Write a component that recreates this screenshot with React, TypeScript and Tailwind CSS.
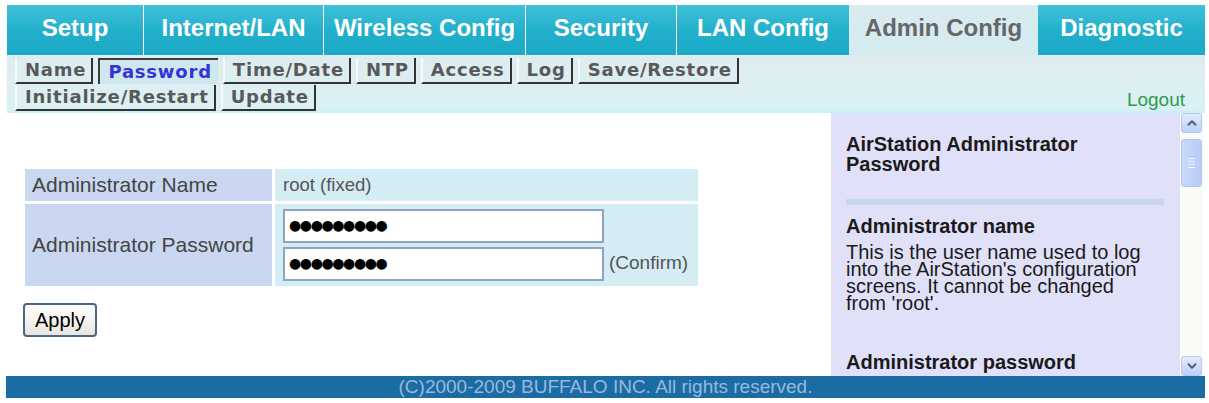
import { ChevronDown, ChevronUp } from "lucide-react";

const tabs = [
  { label: "Setup", w: "w-[136px]" },
  { label: "Internet/LAN", w: "w-[180px]" },
  { label: "Wireless Config", w: "w-[202px]" },
  { label: "Security", w: "w-[151px]" },
  { label: "LAN Config", w: "w-[173px]" },
  { label: "Admin Config", w: "w-[189px]", active: true },
  { label: "Diagnostic", w: "w-[167px]" },
];

const subRow1 = ["Name", "Password", "Time/Date", "NTP", "Access", "Log", "Save/Restore"];
const subRow2 = ["Initialize/Restart", "Update"];

function SubLink({ label }: { label: string }) {
  if (label === "Password") {
    return (
      <span className="h-[26px] pl-[8px] pr-[6px] leading-[24px] border-t-2 border-l-2 border-[#3a3a3a] bg-[#cfe7ee] text-[#3434d6]">
        {label}
      </span>
    );
  }
  return (
    <span className="h-[26px] pl-[8px] pr-[5px] leading-[24px] border-r-2 border-b-2 border-[#333] border-l-2 border-l-[#f4fafa] text-[#58595b]">
      {label}
    </span>
  );
}

function ScrollButton({ children }: { children: React.ReactNode }) {
  return (
    <div className="h-[20px] rounded-[3px] border border-[#b4c8f4] bg-gradient-to-b from-[#e4ecfc] to-[#bccff6] flex items-center justify-center text-[#4d6185]">
      {children}
    </div>
  );
}

export default function App() {
  return (
    <div className="w-[1209px] h-[403px] bg-white overflow-hidden font-['Liberation_Sans',Arial,sans-serif]">
      <div className="pt-[5px] pl-[7px] pr-[4px]">
        <div className="flex h-[50px]">
          {tabs.map((t, i) => (
            <div
              key={t.label}
              className={
                t.active
                  ? `${t.w} flex items-center justify-center pb-[4px] text-[24px] font-bold text-[#646668] bg-gradient-to-b from-[#d9ecf0] to-[#d4ebef]`
                  : `${t.w} flex items-center justify-center pb-[4px] text-[24px] font-bold text-white bg-gradient-to-b from-[#3fc1d9] via-[#22b0cc] to-[#1aa9c6] ${i > 0 && i < 5 ? "border-l border-white" : ""}`
              }
            >
              {t.label}
            </div>
          ))}
        </div>

        <div className="h-[58px] pl-[8px] pr-[20px] pt-[3px] bg-gradient-to-b from-[#dfecef] to-[#daf1f4] border-b-2 border-[#c6f1f6] font-['DejaVu_Sans',sans-serif] font-bold text-[18px] tracking-[0.8px]">
          <div className="flex gap-[5px]">
            {subRow1.map((s) => (
              <SubLink key={s} label={s} />
            ))}
          </div>
          <div className="flex gap-[5px] mt-[1px] items-end">
            {subRow2.map((s) => (
              <SubLink key={s} label={s} />
            ))}
            <span className="ml-auto font-['Liberation_Sans',sans-serif] font-normal tracking-normal text-[19px] leading-[22px] text-[#2f9a4c]">
              Logout
            </span>
          </div>
        </div>
      </div>

      <div className="flex h-[263px]">
        <div className="flex-1 pl-[25px] pt-[56px]">
          <table className="border-separate border-spacing-[3px] -ml-[3px] -mt-[3px] w-[679px]">
            <tbody>
              <tr className="h-[31px]">
                <td className="w-[247px] bg-[#c9d8f0] pl-[7px] text-[21px] text-[#444]">Administrator Name</td>
                <td className="bg-[#d4ecf4] pl-[8px] text-[18.5px] text-[#555]">root (fixed)</td>
              </tr>
              <tr className="h-[81px]">
                <td className="bg-[#c9d8f0] pl-[7px] text-[21px] text-[#444]">Administrator Password</td>
                <td className="bg-[#d4ecf4] pl-[8px] py-[5px]">
                  <div className="flex flex-col gap-[4px]">
                    <div className="w-[321px] h-[34px] border-2 border-[#8ea3bd] bg-white flex items-center pl-[4px] font-['DejaVu_Sans',sans-serif] text-[14px] tracking-[-1.4px] text-black">
                      ●●●●●●●●●
                    </div>
                    <div className="flex items-center">
                      <div className="w-[321px] h-[34px] border-2 border-[#8ea3bd] bg-white flex items-center pl-[4px] font-['DejaVu_Sans',sans-serif] text-[14px] tracking-[-1.4px] text-black">
                        ●●●●●●●●●
                      </div>
                      <span className="ml-[5px] text-[19px] text-[#555]">(Confirm)</span>
                    </div>
                  </div>
                </td>
              </tr>
            </tbody>
          </table>
          <button className="mt-[14px] -ml-[2px] w-[74px] h-[34px] rounded-[4px] border-2 border-[#4a6688] bg-gradient-to-b from-white to-[#e8e6dc] text-[20px] text-black">
            Apply
          </button>
        </div>

        <div className="w-[349px] bg-[#e0e0f8] overflow-hidden pt-[21px] pl-[15px] pr-[26px]">
          <div className="font-bold text-[20px] leading-[20px] text-[#1a1a1a]">AirStation Administrator Password</div>
          <div className="mt-[25px] w-[318px] h-[6px] bg-[#c9d5ec]" />
          <div className="mt-[11px] font-bold text-[20px] leading-[20px] text-[#1a1a1a]">Administrator name</div>
          <p className="mt-[8px] text-[20px] leading-[17px] text-[#1a1a1a]">
            This is the user name used to log into the AirStation's configuration screens. It cannot be changed from 'root'.
          </p>
          <div className="mt-[40px] font-bold text-[20px] leading-[20px] text-[#1a1a1a]">Administrator password</div>
        </div>

        <div className="w-[23px] bg-[#fbfbf6] flex flex-col justify-between px-[1px]">
          <div className="flex flex-col gap-[6px]">
            <ScrollButton>
              <ChevronUp size={14} strokeWidth={3.5} />
            </ScrollButton>
            <div className="h-[48px] rounded-[3px] border border-[#b4c8f4] bg-gradient-to-r from-[#c8d8fa] to-[#b8cdf6] flex flex-col items-center justify-center gap-[2px]">
              <div className="w-[7px] h-[1px] bg-[#eef3fe]" />
              <div className="w-[7px] h-[1px] bg-[#eef3fe]" />
              <div className="w-[7px] h-[1px] bg-[#eef3fe]" />
              <div className="w-[7px] h-[1px] bg-[#eef3fe]" />
            </div>
          </div>
          <ScrollButton>
            <ChevronDown size={14} strokeWidth={3.5} />
          </ScrollButton>
        </div>
        <div className="w-[6px]" />
      </div>

      <div className="ml-[6px] w-[1199px] h-[22px] bg-[#1b6ca4] flex items-center justify-center text-[19px] text-[#98b9da]">
        (C)2000-2009 BUFFALO INC. All rights reserved.
      </div>
    </div>
  );
}
